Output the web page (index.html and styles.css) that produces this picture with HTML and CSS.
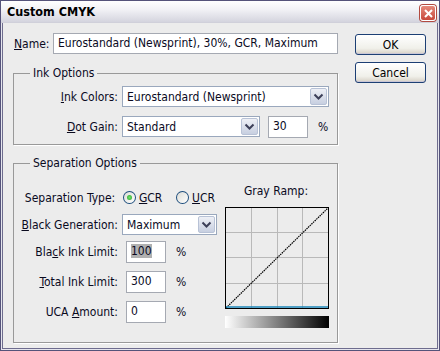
FILE: index.html
```html
<!DOCTYPE html>
<html lang="en">
<head>
  <meta charset="UTF-8" />
  <title>Custom CMYK</title>
  <link rel="stylesheet" href="styles.css">
</head>
<body>
  <div class="janela">
    <div class="titulo">
      <span>Custom CMYK</span>
      <div class="fechar">
        <svg width="9" height="9" viewBox="0 0 9 9"><path d="M1 1 L8 8 M8 1 L1 8" stroke="#fff" stroke-width="2"/></svg>
      </div>
    </div>

    <div class="cliente">
      <div class="principal">
        <div class="linha-nome">
          <label class="rotulo-nome"><u>N</u>ame:</label>
          <div class="campo nome">Eurostandard (Newsprint), 30%, GCR, Maximum</div>
        </div>

        <fieldset class="grupo tinta">
          <legend>Ink Options</legend>
          <div class="linha">
            <label class="rotulo"><u>I</u>nk Colors:</label>
            <div class="lista larga">
              <span>Eurostandard (Newsprint)</span>
              <span class="seta"><svg width="11" height="7" viewBox="0 0 11 7"><path d="M1.5 1.5 L5.5 5.5 L9.5 1.5" fill="none" stroke="#3c3f58" stroke-width="2"/></svg></span>
            </div>
          </div>
          <div class="linha">
            <label class="rotulo"><u>D</u>ot Gain:</label>
            <div class="lista media">
              <span>Standard</span>
              <span class="seta"><svg width="11" height="7" viewBox="0 0 11 7"><path d="M1.5 1.5 L5.5 5.5 L9.5 1.5" fill="none" stroke="#3c3f58" stroke-width="2"/></svg></span>
            </div>
            <div class="campo numero ganho">30</div>
            <span class="pct">%</span>
          </div>
        </fieldset>

        <fieldset class="grupo separacao">
          <legend>Separation Options</legend>
          <div class="colunas">
            <div class="opcoes">
              <div class="linha">
                <label class="rotulo">Separation Type:</label>
                <span class="radio marcado"></span><span class="opcao"><u>G</u>CR</span>
                <span class="radio"></span><span class="opcao"><u>U</u>CR</span>
              </div>
              <div class="linha">
                <label class="rotulo"><u>B</u>lack Generation:</label>
                <div class="lista curta">
                  <span>Maximum</span>
                  <span class="seta"><svg width="11" height="7" viewBox="0 0 11 7"><path d="M1.5 1.5 L5.5 5.5 L9.5 1.5" fill="none" stroke="#3c3f58" stroke-width="2"/></svg></span>
                </div>
              </div>
              <div class="linha">
                <label class="rotulo">Bla<u>c</u>k Ink Limit:</label>
                <div class="campo numero"><span class="selecionado">100</span></div>
                <span class="pct">%</span>
              </div>
              <div class="linha espaco">
                <label class="rotulo"><u>T</u>otal Ink Limit:</label>
                <div class="campo numero">300</div>
                <span class="pct">%</span>
              </div>
              <div class="linha espaco">
                <label class="rotulo">UCA <u>A</u>mount:</label>
                <div class="campo numero">0</div>
                <span class="pct">%</span>
              </div>
            </div>

            <div class="rampa">
              <div class="rampa-titulo">Gray Ramp:</div>
              <svg class="grafico" width="104" height="102" viewBox="0 0 104 102">
                <rect x="0" y="0" width="104" height="102" fill="#ececec"/>
                <path d="M26.5 1 V101 M52.5 1 V101 M77.5 1 V101 M1 25.5 H103 M1 50.5 H103 M1 76.5 H103" stroke="#b9b9b9" stroke-width="1"/>
                <path d="M1 101 L103 1" stroke="#000" stroke-width="1.2" stroke-dasharray="1.5 0.8"/>
                <path d="M1 100 H103" stroke="#1b86b8" stroke-width="1.5"/>
                <rect x="0.5" y="0.5" width="103" height="101" fill="none" stroke="#000" stroke-width="1"/>
              </svg>
              <div class="degrade"></div>
            </div>
          </div>
        </fieldset>
      </div>

      <div class="botoes">
        <button>OK</button>
        <button>Cancel</button>
      </div>
    </div>
  </div>
</body>
</html>
```

FILE: styles.css
```css
body {
  margin: 0;
  font-family: "DejaVu Sans Condensed", "DejaVu Sans", sans-serif;
  font-size: 12px;
  color: #0a0a1e;
}

.janela {
  width: 440px;
  height: 351px;
  box-sizing: border-box;
  border: 1px solid #55537a;
  padding: 2px;
  background-color: #ececec;
  box-shadow: inset 0 0 0 1px #e6e6ee, inset 0 0 0 2px #6e6c8e;
}

.titulo {
  height: 21px;
  margin: -2px -2px 0;
  padding: 0 0 0 6px;
  display: flex;
  align-items: center;
  justify-content: space-between;
  background: linear-gradient(#ffffff, #f2f2f6 40%, #d4d4de);
  font-weight: bold;
  font-size: 12.5px;
  color: #000;
  border-bottom: 1px solid #d0d0da;
}

.fechar {
  width: 16px;
  height: 16px;
  margin-right: 3px;
  margin-top: 3px;
  box-sizing: border-box;
  border: 1px solid #fff;
  border-radius: 3px;
  background: linear-gradient(#e58a7c, #c8483c);
  box-shadow: 0 0 0 1px #b24a40;
  display: flex;
  align-items: center;
  justify-content: center;
}

.cliente {
  display: flex;
  padding: 10px 0 0 10px;
}

.principal {
  width: 325px;
}

.linha-nome {
  display: flex;
  align-items: center;
  height: 21px;
}

.rotulo-nome {
  width: 36px;
  padding-left: 1px;
  margin-right: 3px;
}

.campo {
  box-sizing: border-box;
  height: 21px;
  border: 1px solid #a5a9b2;
  background-color: #fff;
  padding: 0 4px;
  line-height: 19px;
  white-space: nowrap;
  overflow: hidden;
}

.nome {
  flex: 1;
}

.grupo {
  margin: 11px 0 0;
  padding: 0;
  border: 1px solid #999;
  box-shadow: 1px 1px 0 #fff;
}

.grupo legend {
  margin-left: 16px;
  padding: 0 3px;
  line-height: 16px;
}

.tinta {
  padding: 5px 0 7px;
}

.linha {
  display: flex;
  align-items: center;
  height: 21px;
}

.tinta .linha + .linha {
  margin-top: 9px;
}

.rotulo {
  width: 104px;
  text-align: right;
  margin-right: 4px;
  white-space: nowrap;
}

.lista {
  box-sizing: border-box;
  height: 21px;
  border: 1px solid #9aa8bd;
  background-color: #fff;
  display: flex;
  align-items: center;
  justify-content: space-between;
  padding-left: 4px;
}

.seta {
  width: 17px;
  height: 17px;
  margin-right: 1px;
  box-sizing: border-box;
  border: 1px solid #b8c2d6;
  border-radius: 2px;
  background: linear-gradient(#eef0f6, #c7cfe0);
  display: flex;
  align-items: center;
  justify-content: center;
}

.larga {
  width: 207px;
}

.media {
  width: 138px;
}

.curta {
  width: 95px;
}

.numero {
  width: 40px;
  margin-left: 4px;
  height: 22px;
}

.ganho {
  margin-left: 8px;
}

.pct {
  margin-left: 10px;
}

.selecionado {
  background-color: #b0b0b0;
}

.separacao {
  margin-top: 10px;
  padding: 0 0 14px;
}

.colunas {
  display: grid;
  grid-template-columns: 211px 104px;
}

.opcoes {
  padding-top: 16px;
}

.opcoes .linha + .linha {
  margin-top: 6px;
}

.opcoes .espaco {
  margin-top: 9px !important;
}

.radio {
  width: 13px;
  height: 13px;
  box-sizing: border-box;
  border: 1px solid #1f4f7e;
  border-radius: 50%;
  background: linear-gradient(135deg, #dcdcd6, #fff);
  margin-left: 4px;
  margin-right: 3px;
  display: flex;
  align-items: center;
  justify-content: center;
}

.marcado::after {
  content: "";
  width: 5px;
  height: 5px;
  border-radius: 50%;
  background: radial-gradient(#6fe06a, #2aa52a);
}

.opcao {
  margin-right: 10px;
}

.rampa {
  padding-top: 12px;
}

.rampa-titulo {
  text-align: center;
  line-height: 16px;
  margin-left: -2px;
}

.grafico {
  display: block;
  margin-top: 8px;
}

.degrade {
  width: 104px;
  height: 12px;
  margin-top: 7px;
  background: linear-gradient(to right, #fff, #000);
}

.botoes {
  display: flex;
  flex-direction: column;
  gap: 7px;
  margin-left: 17px;
  padding-top: 1px;
}

button {
  width: 71px;
  height: 21px;
  font-family: inherit;
  font-size: 12px;
  color: #000;
  border: 1px solid #1c3f74;
  border-radius: 3px;
  background: linear-gradient(#ffffff, #f0f0ea 70%, #d6d0c5);
  box-shadow: inset 0 -1px 0 #c9c6d6;
  padding: 0;
}
```
